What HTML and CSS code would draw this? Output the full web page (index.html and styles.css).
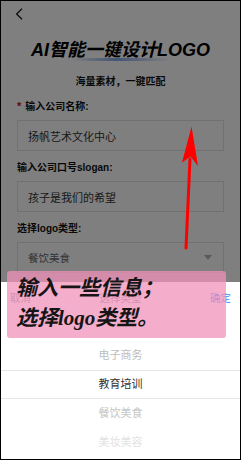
FILE: index.html
```html
<!DOCTYPE html>
<html lang="zh">
<head>
<meta charset="utf-8">
<title>AI智能一键设计LOGO</title>
<link rel="stylesheet" href="styles.css">
</head>
<body>
<div class="screen">
  <div class="page">
    <div class="nav">
      <svg class="back" width="9" height="12" viewBox="0 0 9 12"><path d="M7 0.8 L1.6 6 L7 11.2" fill="none" stroke="#1a1a1a" stroke-width="1.3"/></svg>
    </div>
    <h1 class="title"><span class="lat">AI</span>智能一键设计<span class="lat">LOGO</span></h1>
    <p class="subtitle">海量素材，一键匹配</p>
    <div class="field">
      <label class="label"><span class="req">*</span>输入公司名称:</label>
      <div class="input">扬帆艺术文化中心</div>
    </div>
    <div class="field">
      <label class="label">输入公司口号slogan:</label>
      <div class="input">孩子是我们的希望</div>
    </div>
    <div class="field">
      <label class="label">选择logo类型:</label>
      <div class="input select"><span class="sel-text">餐饮美食</span><span class="caret"></span></div>
    </div>
  </div>
  <div class="mask"></div>
  <div class="sheet">
    <div class="sheet-head">
      <span class="cancel">取消</span>
      <span class="sheet-title">选择类型</span>
      <span class="ok">确定</span>
    </div>
    <div class="picker">
      <div class="item near">电子商务</div>
      <div class="item active">教育培训</div>
      <div class="item near2">餐饮美食</div>
      <div class="item far2">美妆美容</div>
    </div>
  </div>
  <div class="note">输入一些信息；<br>选择<span class="serif">logo</span>类型。</div>
  <svg class="arrow" width="239" height="458" viewBox="0 0 239 458">
    <line x1="185" y1="247" x2="189" y2="158" stroke="#ff0000" stroke-width="3" stroke-linecap="round"/>
    <polygon points="190.5,125.5 181,161.5 189.5,155.5 197,165" fill="#ff0000"/>
  </svg>
</div>
</body>
</html>
```

FILE: styles.css
```css
* { box-sizing: border-box; }
html, body { margin: 0; padding: 0; background: #000; }
body { font-family: "Liberation Sans", "Noto Sans CJK SC", sans-serif; }

.screen {
  position: relative;
  width: 241px;
  height: 460px;
  border: 1px solid #000;
  background: #fff;
  overflow: hidden;
}

.page { padding: 0 16px; }

.nav {
  height: 37px;
  display: flex;
  align-items: flex-start;
  padding: 7px 0 0 0;
}
.back { display: block; margin-left: -2px; }

.title {
  margin: 0;
  height: 24px;
  line-height: 24px;
  font-size: 18px;
  font-weight: 700;
  font-style: italic;
  text-align: center;
  color: #000;
  background-image: linear-gradient(90deg, rgba(120,160,230,0) 0%, rgba(120,160,230,0.9) 45%, rgba(120,160,230,0) 100%);
  background-repeat: no-repeat;
  background-size: 100px 3px;
  background-position: 50% 20px;
}
.title .lat { font-family: "Liberation Sans", sans-serif; }

.subtitle {
  margin: 13px 0 0 0;
  text-align: center;
  font-size: 10px;
  line-height: 14px;
  font-weight: 700;
  color: #111;
}

.field { margin-top: 10px; }
.label {
  display: block;
  font-size: 10px;
  line-height: 14px;
  font-weight: 700;
  color: #111;
}
.req { color: #d0021b; margin-right: 4px; font-size: 11px; }

.input {
  margin-top: 6px;
  height: 31px;
  border: 1px solid #e3e3e3;
  background: #fff;
  padding: 0 11px 0 10px;
  display: flex;
  align-items: center;
  font-size: 11px;
  color: #333;
}
.select { justify-content: space-between; }
.sel-text { color: #6a6a6a; font-size: 10.5px; }
.caret {
  width: 0; height: 0;
  border-left: 4px solid transparent;
  border-right: 4px solid transparent;
  border-top: 5px solid #b5b5b5;
}

.mask {
  position: absolute;
  inset: 0;
  background: rgba(0,0,0,0.5);
}

.sheet {
  position: absolute;
  left: 0; right: 0; bottom: 0;
  height: 177px;
  background: #fff;
}
.sheet-head {
  height: 30px;
  display: flex;
  align-items: center;
  justify-content: space-between;
  padding: 0 9px;
  font-size: 10.5px;
}
.cancel { color: #888; }
.sheet-title { color: #888; }
.ok { color: #3d8ef5; }

.picker { display: flex; flex-direction: column; padding-top: 29px; }
.item {
  height: 29px;
  line-height: 29px;
  text-align: center;
  font-size: 11px;
  color: #c4c4c4;
}
.item.active {
  color: #333;
  border-top: 1px solid #e6e6e6;
  border-bottom: 1px solid #e6e6e6;
  line-height: 27px;
}
.item.near { color: #bdbdbd; }
.item.near2 { color: #c6c6c6; }
.item.far2 { color: #e2e2e2; }

.note {
  position: absolute;
  left: 6px;
  top: 270px;
  width: 219px;
  height: 67px;
  border-radius: 3px;
  background: rgba(240,145,185,0.74);
  padding: 2px 0 0 9px;
  font-family: "Liberation Serif", "Noto Sans CJK SC", serif;
  font-size: 21px;
  line-height: 30px;
  font-weight: 700;
  font-style: italic;
  color: #151515;
}
.note .serif { font-family: "Liberation Serif", serif; }

.arrow {
  position: absolute;
  left: 0;
  top: 0;
  pointer-events: none;
}
```
